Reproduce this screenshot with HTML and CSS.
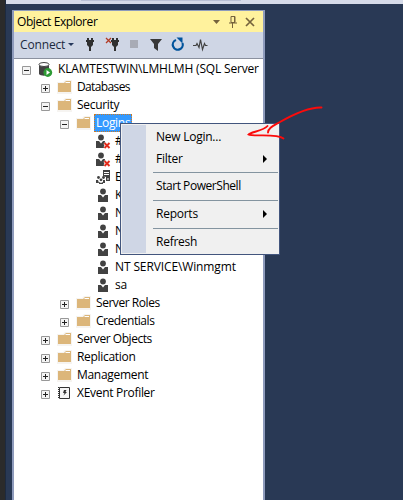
FILE: index.html
```
<!DOCTYPE html>
<html lang="en">
<head>
<meta charset="utf-8">
<title>Object Explorer</title>
<link rel="stylesheet" href="styles.css">
</head>
<body>
<svg class="defs" width="0" height="0">
  <symbol id="folder" viewBox="0 0 15 14"><path d="M0 2h6l2-2h7v14H0z" fill="#f6f4f1"/><path d="M1 3h6l2-2h5v11H1z" fill="#dcb67a"/><path d="M8.500 2.500h4.500" stroke="#fff"/></symbol>
  <symbol id="plus" viewBox="0 0 9 9"><path d="M.5.5h8v8h-8z" fill="#f4f4f4" stroke="#989898"/><path d="M2 4.500h5M4.500 2v5" stroke="#222"/></symbol>
  <symbol id="minus" viewBox="0 0 9 9"><path d="M.5.5h8v8h-8z" fill="#f4f4f4" stroke="#989898"/><path d="M2 4.500h5" stroke="#222"/></symbol>
  <symbol id="user" viewBox="0 0 15 15"><circle cx="7" cy="3.500" r="2.900" fill="#424242"/><path d="M2 7h3l2 2.500L9 7h3v7H2z" fill="#424242"/></symbol>
  <symbol id="userx" viewBox="0 0 15 15"><circle cx="5" cy="3.500" r="2.900" fill="#424242"/><path d="M0 7h3l2 2.500L7 7h2l-1 7H0z" fill="#424242"/><path d="M8.500 9l5 5M13.500 9l-5 5" stroke="#fff" stroke-width="3"/><path d="M8.500 9l5 5M13.500 9l-5 5" stroke="#e32b1b" stroke-width="1.900"/></symbol>
  <symbol id="group" viewBox="0 0 15 15"><path d="M7 0h7v11h-4V7L7 6z" fill="#424242"/><path d="M8 2.500h5M8 4.500h5" stroke="#fff"/><path d="M11 9h2" stroke="#fff"/><g fill="#424242"><circle cx="2.500" cy="7.500" r="1.400"/><circle cx="7.500" cy="7.500" r="1.400"/><circle cx="5" cy="9.800" r="1.400"/><path d="M0 10h2l1 3H0zM7 10h2v3H7zM3 12l2 1 2-1v2H3z"/></g></symbol>
</svg>
<div class="desktop">
  <div class="edge"></div>
  <div class="strip"><i></i></div>
  <section class="panel">
    <header class="title"><span>Object Explorer</span>
      <svg width="46" height="14" viewBox="0 0 46 14"><path d="M1 5h7L4.500 9z" fill="#75633d"/><path d="M19 1.500h4v6h-4zM22.500 1v7M17 8h8M20.500 8v5" fill="none" stroke="#75633d"/><path d="M34 3l8 8M42 3l-8 8" stroke="#75633d" stroke-width="1.700"/></svg>
    </header>
    <div class="toolbar"><span>Connect</span>
      <svg width="160" height="20" viewBox="68 36 160 20"><path d="M68 44h6l-3 3z" fill="#26385c"/>
        <path d="M87 39h2v2h2v-2h2v2h1v2h-1v3l-2 2v4h-2v-4l-2-2v-3h-1v-2h1z" fill="#303030"/>
        <path d="M112 39h2v2h2v-2h2v2h1v2h-1v3l-2 2v4h-2v-4l-2-2v-3h-1v-2h1z" fill="#303030"/>
        <path d="M106 39l5 5M111 39l-5 5" stroke="#b23b25" stroke-width="1.300"/><path d="M130 41h8v8h-8z" fill="#a8abb5"/>
        <path d="M150 40h12l-4 5v7l-4-3v-4z" fill="#383838"/>
        <path d="M176 41a5 5 0 1 0 6.500 3" fill="none" stroke="#00539c" stroke-width="2.200"/><path d="M176.500 38.500h6v6z" fill="#00539c"/>
        <path d="M193 46.500h3l1-2 2 4 1.500-8 2 10 2-6 1 2h2" fill="none" stroke="#424242" stroke-width="1.200"/></svg>
    </div>
    <div class="tree">
      <div class="row root"><svg class="box"><use href="#minus"/></svg><svg class="server" width="15" height="15" viewBox="0 0 15 15"><path d="M1 2v10c1 2 7 2 8 1l2-6V2z" fill="#424242"/><ellipse cx="6" cy="2.500" rx="5" ry="2" fill="#fff" stroke="#424242"/><circle cx="9.800" cy="10.500" r="4.400" fill="#2e9b35"/><path d="M8.500 8l3.500 2.500L8.500 13z" fill="#fff"/></svg><span>KLAMTESTWIN\LMHLMH (SQL Server</span></div>
      <div class="row l1"><svg class="box"><use href="#plus"/></svg><svg class="folder"><use href="#folder"/></svg><span class="tighter">Databases</span></div>
      <div class="row l1"><svg class="box"><use href="#minus"/></svg><svg class="folder"><use href="#folder"/></svg><span>Security</span></div>
      <div class="row l2"><svg class="box"><use href="#minus"/></svg><svg class="folder"><use href="#folder"/></svg><span class="selected">Logins</span></div>
      <div class="row l3"><svg class="ico"><use href="#userx"/></svg><span>##</span></div>
      <div class="row l3"><svg class="ico"><use href="#userx"/></svg><span>##</span></div>
      <div class="row l3"><svg class="ico"><use href="#group"/></svg><span>B</span></div>
      <div class="row l3"><svg class="ico"><use href="#user"/></svg><span>K</span></div>
      <div class="row l3"><svg class="ico"><use href="#user"/></svg><span>N</span></div>
      <div class="row l3"><svg class="ico"><use href="#user"/></svg><span>N</span></div>
      <div class="row l3"><svg class="ico"><use href="#user"/></svg><span>N</span></div>
      <div class="row l3"><svg class="ico"><use href="#user"/></svg><span class="wide">NT SERVICE\Winmgmt</span></div>
      <div class="row l3"><svg class="ico"><use href="#user"/></svg><span>sa</span></div>
      <div class="row l2"><svg class="box"><use href="#plus"/></svg><svg class="folder"><use href="#folder"/></svg><span class="tight">Server Roles</span></div>
      <div class="row l2"><svg class="box"><use href="#plus"/></svg><svg class="folder"><use href="#folder"/></svg><span class="tight">Credentials</span></div>
      <div class="row l1"><svg class="box"><use href="#plus"/></svg><svg class="folder"><use href="#folder"/></svg><span class="tight">Server Objects</span></div>
      <div class="row l1"><svg class="box"><use href="#plus"/></svg><svg class="folder"><use href="#folder"/></svg><span>Replication</span></div>
      <div class="row l1"><svg class="box"><use href="#plus"/></svg><svg class="folder"><use href="#folder"/></svg><span>Management</span></div>
      <div class="row l1"><svg class="box"><use href="#plus"/></svg><svg class="folder" viewBox="0 0 15 14"><path d="M2.500 1.500h10v11h-10z" fill="#f5f5f5" stroke="#333"/><path d="M1.500 1v12" stroke="#333" stroke-dasharray="1 1"/><path d="M7 4h2.500L8.500 6H10L6.500 9.500l1-2.500H6z" fill="#333"/></svg><span>XEvent Profiler</span></div>
    </div>
  </section>
  <nav class="menu">
    <div class="item">New Login...</div>
    <div class="item">Filter<i></i></div>
    <hr class="first">
    <div class="item tighter">Start PowerShell</div>
    <hr>
    <div class="item">Reports<i></i></div>
    <hr>
    <div class="item">Refresh</div>
  </nav>
  <svg class="mark" width="90" height="40" viewBox="240 100 90 40"><path d="M267.500 126c-4 5-17 6-19 8.500 4 2.500 28-1.500 35 4M268 132.500c0-5 6-7 12-10.500 14-8 30-15 41.500-14.500" fill="none" stroke="#fb0b0b" stroke-width="1.900" stroke-linecap="round"/></svg>
</div>
</body>
</html>
```
FILE: styles.css
```
* { box-sizing: border-box; }
body { margin: 0; font: 12px/18px "Open Sans", "Noto Sans", sans-serif; letter-spacing: -0.3px; color: #000; }
.defs { position: absolute; }
.desktop {
  position: relative;
  display: grid;
  grid-template: 4px 496px / 6px 397px;
  width: 403px;
  height: 500px;
  overflow: hidden;
  background: #293955;
}
.edge { grid-row: 1 / 3; background: #2b2b2b; border-right: 1px solid #1d2a3f; }
.strip { background: #d6dbe9; padding-left: 75px; }
.strip i { display: block; width: 160px; height: 1px; background: #b9c0d5; }
.panel {
  display: flex;
  flex-direction: column;
  width: 253px;
  height: 490px;
  margin: 6px 0 0 6px;
  border: solid #8e9bbc;
  border-width: 1px 2px 0;
  background: #fff;
}
.title {
  flex: 0 0 21px;
  display: flex;
  justify-content: space-between;
  align-items: center;
  padding: 0 5px 0 3px;
  background: #fff29d;
}
.title span { letter-spacing: -0.42px; }
.toolbar {
  flex: 0 0 27px;
  display: flex;
  align-items: center;
  padding-left: 6px;
  border-bottom: 1px solid #8b919f;
  background: #cfd6e5;
  color: #1b293e;
}
.toolbar span { width: 48px; letter-spacing: -0.15px; }
.tree { flex: 1; padding-top: 1px; }
.row { display: flex; height: 18px; align-items: center; white-space: nowrap; }
.row span { line-height: 16px; height: 17px; }
.row .tight { letter-spacing: -0.45px; }
.row .tighter { letter-spacing: -0.63px; }
.row .wide { letter-spacing: -0.12px; }
.root { padding-left: 8px; }
.root span { letter-spacing: -0.17px; }
.l1 { padding-left: 27px; }
.l2 { padding-left: 46px; }
.l3 { padding-left: 82px; }
.box { width: 9px; height: 9px; margin: 3px 7px 0 0; }
.server { margin-right: 5px; }
.folder { width: 15px; height: 14px; margin-right: 5px; }
.ico { width: 15px; height: 15px; margin-right: 4px; }
.row .selected {
  height: 18px;
  margin-left: -2px;
  padding: 0 1px;
  border: 1px dotted #d07a20;
  background: #3399ff;
  color: #fff;
}
.menu {
  position: absolute;
  left: 120px;
  top: 123px;
  width: 160px;
  height: 132px;
  padding: 2px 1px 0 32px;
  border: 1px solid #42557d;
  background: linear-gradient(#cfd6e5, #cfd6e5) 1px 1px / 24px 128px no-repeat #f0f0f0;
}
.item { display: flex; align-items: center; justify-content: space-between; height: 22px; padding: 0 11px 0 3px; letter-spacing: -0.25px; }
.item.tighter { letter-spacing: -0.45px; }
.item i { border: solid transparent; border-width: 4px 0 4px 4px; border-left-color: #000; }
.menu hr { height: 1px; margin: 3px 0 2px; border: 0; background: #8494a0; }
.menu .first { margin-top: 2px; }
.mark { position: absolute; left: 240px; top: 100px; }
```
